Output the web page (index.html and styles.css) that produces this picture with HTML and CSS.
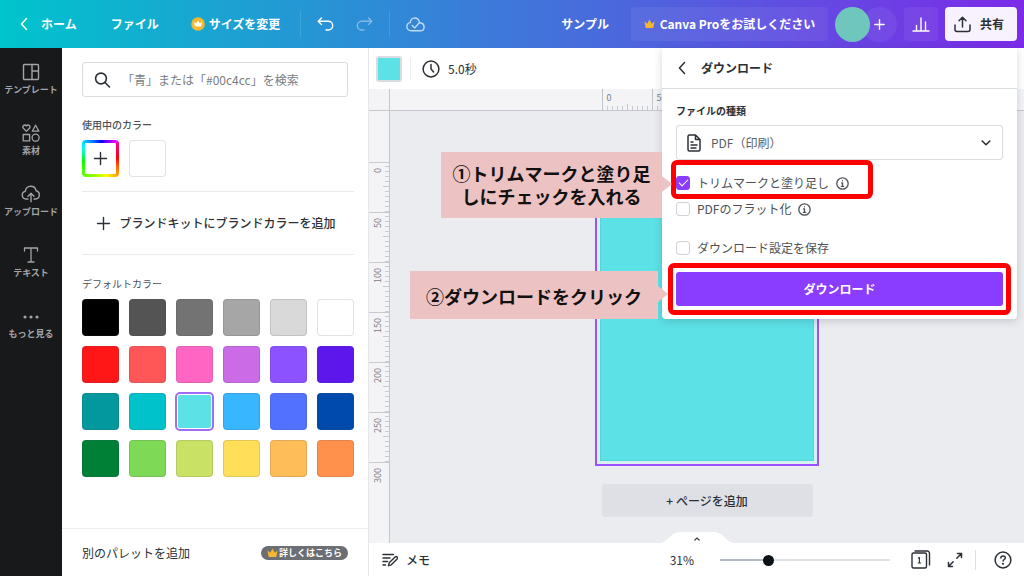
FILE: index.html
```html
<!DOCTYPE html>
<html lang="ja">
<head>
<meta charset="utf-8">
<meta name="viewport" content="width=device-width, initial-scale=1">
<title>サンプル - Canva</title>
<link rel="stylesheet" href="styles.css">
</head>
<body>
<div class="app">
  <header class="topbar">
    <button class="bar-btn home-btn">
      <svg width="8" height="14" viewBox="0 0 8 14" fill="none" stroke="currentColor" stroke-width="1.5" stroke-linecap="round" stroke-linejoin="round"><path d="M6.5 1.5 1.5 7l5 5.5"/></svg>
      ホーム
    </button>
    <button class="bar-btn file-btn">ファイル</button>
    <button class="bar-btn size-btn">
      <svg width="14" height="14" viewBox="0 0 14 14"><circle cx="7" cy="7" r="6.8" fill="#f5b82e"/><path d="M3 4.8 5 6.6 7 3.4l2 3.2 2-1.8-.9 4.8H3.9z" fill="#fff"/></svg>
      サイズを変更
    </button>
    <span class="bar-line"></span>
    <button class="bar-btn undo-btn" aria-label="元に戻す">
      <svg width="17" height="15" viewBox="0 0 17 15" fill="none" stroke="currentColor" stroke-width="1.4" stroke-linecap="round" stroke-linejoin="round"><path d="M4.5 1 1.2 4.2l3.3 3.2M1.5 4.2h9.8a4.3 4.3 0 0 1 0 8.8H9"/></svg>
    </button>
    <button class="bar-btn redo-btn" aria-label="やり直し">
      <svg width="17" height="15" viewBox="0 0 17 15" fill="none" stroke="currentColor" stroke-width="1.4" stroke-linecap="round" stroke-linejoin="round"><path d="m12.5 1 3.3 3.2-3.3 3.2M15.5 4.2H5.7a4.3 4.3 0 0 0 0 8.8H8"/></svg>
    </button>
    <span class="bar-line"></span>
    <span class="cloud">
      <svg width="19" height="15" viewBox="0 0 19 15" fill="none" stroke="currentColor" stroke-width="1.4" stroke-linecap="round" stroke-linejoin="round"><path d="M13.5 5.5C12.9 2.7 11.2 1 8.8 1 6.2 1 4.3 3 4.3 5.6 2.3 5.9.9 7.6.9 9.6c0 2.3 1.8 4.2 4.2 4.2h9c2.200 0 4-1.600 4-3.900 0-2-1.400-3.500-3.200-3.900-.7-.2-1.600 0-2.300.4M6.300 8.500 8.700 11l4-4.600"/></svg>
    </span>
    <div class="topbar-right">
      <span class="doc-title">サンプル</span>
      <button class="pro-btn">
        <svg width="11" height="10" viewBox="0 0 11 10" fill="#f5b82e"><path d="M.5 2.500 3.200 4.800 5.500.5l2.300 4.300 2.700-2.300L9.300 9H1.700z"/></svg>
        Canva Proをお試しください
      </button>
      <div class="people">
        <span class="avatar"></span>
        <button class="invite" aria-label="メンバーを追加">
          <svg width="11" height="11" viewBox="0 0 11 11" stroke="currentColor" stroke-width="1.400" stroke-linecap="round"><path d="M5.500.8v9.400M.8 5.500h9.400"/></svg>
        </button>
      </div>
      <button class="stats-btn" aria-label="インサイト">
        <svg width="18" height="15" viewBox="0 0 18 15" fill="none" stroke="currentColor" stroke-width="1.400" stroke-linecap="round"><path d="M1 14h16M4.500 13.500V8.500M9 13.500V1M13.500 13.500V5"/></svg>
      </button>
      <button class="share-btn">
        <svg width="17" height="17" viewBox="0 0 17 17" fill="none" stroke="currentColor" stroke-width="1.500" stroke-linecap="round" stroke-linejoin="round"><path d="M1 9v4.500A2 2 0 0 0 3 15.500h11a2 2 0 0 0 2-2V9M8.500 11V1.500M5 4.700l3.500-3.500L12 4.700"/></svg>
        共有
      </button>
    </div>
  </header>

  <div class="workspace">
    <nav class="rail">
      <button class="rail-item">
        <svg width="18" height="18" viewBox="0 0 18 18" fill="none" stroke="currentColor" stroke-width="1.400" stroke-linejoin="round"><rect x="1.500" y="1.500" width="15" height="15" rx="1"/><path d="M10 1.500v15M10 8h6.500"/></svg>
        テンプレート
      </button>
      <button class="rail-item">
        <svg width="18" height="18" viewBox="0 0 18 18" fill="none" stroke="currentColor" stroke-width="1.300" stroke-linejoin="round"><path d="M4.400 7.400 1.400 4.300C.2 2.900 1.200 1 2.700 1c.8 0 1.400.4 1.700 1.100C4.700 1.400 5.300 1 6.100 1c1.500 0 2.500 1.900 1.300 3.300zM13.600 1.200l3.300 6h-6.600z"/><rect x="1.200" y="10.500" width="6.400" height="6.400"/><circle cx="13.600" cy="13.700" r="3.500"/></svg>
        素材
      </button>
      <button class="rail-item">
        <svg width="20" height="18" viewBox="0 0 20 18" fill="none" stroke="currentColor" stroke-width="1.400" stroke-linecap="round" stroke-linejoin="round"><path d="M7 14H5a3.900 3.900 0 0 1-.7-7.700C4.600 3.300 7 1.200 9.800 1.200c2.900 0 4.900 2 5.300 4.600A4.200 4.200 0 0 1 14.900 14H13M10 16.800V8.500M7 11.200l3-3 3 3"/></svg>
        アップロード
      </button>
      <button class="rail-item">
        <svg width="18" height="18" viewBox="0 0 18 18" fill="none" stroke="currentColor" stroke-width="1.300" stroke-linecap="round" stroke-linejoin="round"><path d="M2.500 5V2h13v3M9 2v14M6 16h6"/></svg>
        テキスト
      </button>
      <button class="rail-item">
        <svg width="18" height="18" viewBox="0 0 18 18" fill="currentColor"><circle cx="3" cy="10" r="1.600"/><circle cx="9" cy="10" r="1.600"/><circle cx="15" cy="10" r="1.600"/></svg>
        もっと見る
      </button>
    </nav>

    <aside class="panel">
      <div class="panel-body">
        <label class="search">
          <svg width="18" height="18" viewBox="0 0 18 18" fill="none" stroke="currentColor" stroke-width="1.600" stroke-linecap="round"><circle cx="7" cy="7.500" r="5.400"/><path d="m11 11.500 4.500 4.500"/></svg>
          <input type="search" aria-label="カラーを検索" placeholder="「青」または「#00c4cc」を検索">
        </label>
        <h2 class="section-title">使用中のカラー</h2>
        <div class="swatches">
          <button class="swatch add-color" aria-label="カラーを追加">
            <svg width="15" height="15" viewBox="0 0 15 15" stroke="currentColor" stroke-width="1.400" stroke-linecap="round"><path d="M7.500 1.500v12M1.500 7.500h12"/></svg>
          </button>
          <button class="swatch white" aria-label="ホワイト"></button>
        </div>
        <button class="brand-btn">
          <svg width="15" height="15" viewBox="0 0 15 15" stroke="currentColor" stroke-width="1.400" stroke-linecap="round"><path d="M7.500 1.500v12M1.500 7.500h12"/></svg>
          ブランドキットにブランドカラーを追加
        </button>
        <h2 class="section-title default-title">デフォルトカラー</h2>
        <div class="swatches">
          <button class="swatch c-black" aria-label="黒"></button>
          <button class="swatch c-gray1" aria-label="ダークグレー"></button>
          <button class="swatch c-gray2" aria-label="グレー"></button>
          <button class="swatch c-gray3" aria-label="ミディアムグレー"></button>
          <button class="swatch c-gray4" aria-label="ライトグレー"></button>
          <button class="swatch white" aria-label="白"></button>
          <button class="swatch c-red" aria-label="赤"></button>
          <button class="swatch c-coral" aria-label="コーラル"></button>
          <button class="swatch c-pink" aria-label="ピンク"></button>
          <button class="swatch c-orchid" aria-label="オーキッド"></button>
          <button class="swatch c-purple" aria-label="パープル"></button>
          <button class="swatch c-violet" aria-label="バイオレット"></button>
          <button class="swatch c-teal" aria-label="ティール"></button>
          <button class="swatch c-turquoise" aria-label="ターコイズ"></button>
          <button class="swatch c-aqua selected" aria-label="アクア"></button>
          <button class="swatch c-sky" aria-label="スカイブルー"></button>
          <button class="swatch c-blue" aria-label="ブルー"></button>
          <button class="swatch c-navy" aria-label="コバルト"></button>
          <button class="swatch c-green" aria-label="グリーン"></button>
          <button class="swatch c-grass" aria-label="グラスグリーン"></button>
          <button class="swatch c-lime" aria-label="ライム"></button>
          <button class="swatch c-yellow" aria-label="イエロー"></button>
          <button class="swatch c-peach" aria-label="ピーチ"></button>
          <button class="swatch c-orange" aria-label="オレンジ"></button>
        </div>
      </div>
      <footer class="panel-footer">
        <span>別のパレットを追加</span>
        <a class="more-pill" href="#">
          <svg width="11" height="10" viewBox="0 0 11 10" fill="#f5b82e"><path d="M.5 2.500 3.200 4.800 5.500.5l2.300 4.300 2.700-2.300L9.300 9H1.700z"/></svg>
          詳しくはこちら
        </a>
      </footer>
    </aside>

    <main class="editor">
      <div class="toolbar">
        <button class="bg-color" aria-label="背景色"></button>
        <span class="tool-line"></span>
        <button class="time-btn">
          <svg width="18" height="18" viewBox="0 0 18 18" fill="none" stroke="currentColor" stroke-width="1.500" stroke-linecap="round" stroke-linejoin="round"><circle cx="9" cy="9" r="7.900"/><path d="M9 4.500V9l2.600 3"/></svg>
          5.0秒
        </button>
      </div>
      <div class="stage">
        <div class="ruler-corner"></div>
        <div class="ruler-top"><div class="ruler-scale"><span>0</span><span>50</span><span>100</span><span>150</span></div></div>
        <div class="ruler-left"><span>0</span><span>50</span><span>100</span><span>150</span><span>200</span><span>250</span><span class="last">300</span></div>
        <div class="canvas">
          <div class="page"><div class="artboard"></div></div>
          <button class="add-page">+ ページを追加</button>
        </div>
      </div>
      <footer class="statusbar">
        <button class="page-tab" aria-label="ページを表示">
          <svg width="74" height="12" viewBox="0 0 74 12" fill="none"><path d="M0 12C9 11 10 1 20 1h34c10 0 11 10 20 11z" fill="#fff"/><path d="m34.800 9 2.200-2 2.200 2" stroke="#3c4043" stroke-width="1.200" stroke-linecap="round"/></svg>
        </button>
        <button class="memo-btn">
          <svg width="16" height="14" viewBox="0 0 16 14" fill="none" stroke="currentColor" stroke-width="1.400" stroke-linecap="round" stroke-linejoin="round"><path d="M1 1.500h10.500M1 5h7M1 8.500h4.500M1 12h2.500"/><path d="m6.500 12.700.7-2.900 5.900-5.900c1.400-1.200 3.200.6 2 2l-5.800 5.900z"/></svg>
          メモ
        </button>
        <div class="zoom-tools">
          <label for="zoom">31%</label>
          <input id="zoom" class="zoom" type="range" min="0" max="100" value="27">
          <button class="icon-btn" aria-label="ページ一覧">
            <svg width="21" height="20" viewBox="0 0 21 20" fill="none" stroke="currentColor" stroke-width="1.400" stroke-linejoin="round"><rect x="2" y="3" width="14.500" height="15" rx="1.500"/><path d="M4.500 1h12.800A2.200 2.200 0 0 1 19.500 3.200V15.500"/><path d="M8 8.200 9.400 7.400v5.600M7.700 13h3.400" stroke-width="1.100"/></svg>
          </button>
          <button class="icon-btn" aria-label="全画面表示">
            <svg width="16" height="16" viewBox="0 0 16 16" fill="none" stroke="currentColor" stroke-width="1.500" stroke-linecap="round" stroke-linejoin="round"><path d="M10.500 1.500h4v4M14.500 1.500 9.800 6.200M5.500 14.500h-4v-4M1.500 14.500l4.700-4.700"/></svg>
          </button>
          <span class="status-line"></span>
          <button class="icon-btn" aria-label="ヘルプ">
            <svg width="18" height="18" viewBox="0 0 18 18" fill="none" stroke="currentColor" stroke-width="1.500" stroke-linecap="round"><circle cx="9" cy="9" r="7.900"/><path d="M6.900 7.100c0-1.300 1-2.100 2.200-2.100s2.200.8 2.200 1.900c0 1.500-2.200 1.700-2.200 3.200"/><circle cx="9" cy="12.800" r=".4"/></svg>
          </button>
        </div>
      </footer>
    </main>
  </div>

  <section class="download" aria-label="ダウンロード">
    <div class="download-head">
      <button class="back" aria-label="戻る">
        <svg width="8" height="14" viewBox="0 0 8 14" fill="none" stroke="currentColor" stroke-width="1.500" stroke-linecap="round" stroke-linejoin="round"><path d="M6.500 1.500 1.500 7l5 5.500"/></svg>
      </button>
      <h1>ダウンロード</h1>
    </div>
    <form class="download-form">
      <label class="type-label" for="type">ファイルの種類</label>
      <div class="select-wrap">
        <svg width="14" height="18" viewBox="0 0 14 18" fill="none" stroke="currentColor" stroke-width="1.500" stroke-linecap="round" stroke-linejoin="round"><path d="M8.500 1H2.500C1.700 1 1 1.700 1 2.500v13c0 .8.700 1.500 1.500 1.500h9c.8 0 1.500-.7 1.500-1.500v-10zM8.500 1v4.500H13M4 8h2M4 11h6M4 14h5"/></svg>
        <select id="type"><option>PDF（印刷）</option></select>
        <svg width="10" height="6" viewBox="0 0 10 6" fill="none" stroke="currentColor" stroke-width="1.600" stroke-linecap="round" stroke-linejoin="round"><path d="m1.200 1 3.800 3.700L8.800 1"/></svg>
      </div>
      <div class="option marked">
        <input type="checkbox" id="trim" checked><label for="trim">トリムマークと塗り足し</label>
        <svg class="info" width="13" height="13" viewBox="0 0 13 13" fill="none" stroke="currentColor" stroke-width="1.300" stroke-linecap="round"><circle cx="6.500" cy="6.500" r="5.700"/><path d="M6.500 6v3.300M5.700 6h.8M5.400 9.400h2.200M6.500 3.700v.1"/></svg>
        <p class="callout callout-trim">①トリムマークと塗り足<br>しにチェックを入れる</p>
      </div>
      <div class="option">
        <input type="checkbox" id="flat"><label for="flat">PDFのフラット化</label>
        <svg class="info" width="13" height="13" viewBox="0 0 13 13" fill="none" stroke="currentColor" stroke-width="1.300" stroke-linecap="round"><circle cx="6.500" cy="6.500" r="5.700"/><path d="M6.500 6v3.300M5.700 6h.8M5.400 9.400h2.200M6.500 3.700v.1"/></svg>
      </div>
      <div class="option save-option">
        <input type="checkbox" id="save"><label for="save">ダウンロード設定を保存</label>
      </div>
      <div class="submit marked">
        <button type="button" class="download-btn">ダウンロード</button>
        <p class="callout callout-download">②ダウンロードをクリック</p>
      </div>
    </form>
  </section>
</div>
</body>
</html>
```

FILE: styles.css
```css
* {
  box-sizing: border-box;
}

body {
  margin: 0;
  font-family: "Noto Sans CJK JP", "Noto Sans", sans-serif;
  font-size: 12px;
  line-height: 18px;
  color: #2b3036;
  background: #fff;
}

button,
input,
select {
  font: inherit;
  color: inherit;
}

button {
  display: flex;
  align-items: center;
  justify-content: center;
  padding: 0;
  border: 0;
  background: none;
  white-space: nowrap;
  cursor: pointer;
}

svg {
  display: block;
  flex: none;
}

h1,
h2,
p {
  margin: 0;
  font-size: inherit;
}

.app {
  position: relative;
  display: flex;
  flex-direction: column;
  min-height: 100vh;
}

/* Top bar */

.topbar {
  display: flex;
  align-items: center;
  height: 48px;
  padding: 0 7px 0 20px;
  background: linear-gradient(90deg, #00c4cc, #7d2ae8);
  color: #fff;
  font-weight: 700;
}

.home-btn {
  gap: 13px;
}

.file-btn {
  margin-left: 34px;
}

.size-btn {
  gap: 4px;
  margin: 0 20px 0 32px;
}

.bar-line {
  width: 1px;
  height: 26px;
  background: rgba(255, 255, 255, 0.12);
}

.undo-btn {
  margin-left: 16px;
}

.redo-btn {
  margin: 0 16px 0 22px;
  opacity: 0.4;
}

.cloud {
  margin-left: 16px;
  opacity: 0.7;
}

.topbar-right {
  display: flex;
  align-items: center;
  gap: 7px;
  margin-left: auto;
}

.doc-title {
  margin-right: 15px;
}

.pro-btn {
  gap: 5px;
  width: 197px;
  height: 34px;
  border-radius: 4px;
  background: rgba(255, 255, 255, 0.06);
}

.people {
  display: flex;
}

.avatar {
  z-index: 1;
  width: 35px;
  height: 35px;
  border-radius: 50%;
  background: #6fc6bd;
}

.invite {
  width: 35px;
  height: 35px;
  margin-left: -8px;
  border-radius: 50%;
  background: rgba(255, 255, 255, 0.06);
}

.stats-btn {
  width: 34px;
  height: 34px;
  border-radius: 4px;
  background: rgba(255, 255, 255, 0.06);
}

.share-btn {
  gap: 9px;
  width: 72px;
  height: 34px;
  padding-right: 4px;
  border-radius: 4px;
  background: #f7f2fd;
  color: #2b3036;
}

/* Main columns */

.workspace {
  display: flex;
  flex: 1;
}

.rail {
  flex: none;
  width: 62px;
  padding-top: 7px;
  background: #18191b;
}

.rail-item {
  flex-direction: column;
  gap: 3px;
  width: 100%;
  height: 61px;
  padding-bottom: 12px;
  color: #a2a4a7;
  font-size: 9px;
  font-weight: 700;
  line-height: 12px;
}

.panel {
  display: flex;
  flex: none;
  flex-direction: column;
  width: 306px;
}

.panel-body {
  flex: 1;
  padding: 14px 14px 0 20px;
}

.search {
  display: flex;
  align-items: center;
  gap: 10px;
  height: 35px;
  margin-right: 6px;
  padding-left: 11px;
  border: 1px solid #d8dbdf;
  border-radius: 3px;
}

.search input {
  flex: 1;
  min-width: 0;
  padding: 0;
  border: 0;
  outline: 0;
  background: none;
}

.search input::placeholder {
  color: #7a7e83;
  opacity: 1;
}

.section-title {
  margin: 20px 0 7px;
  font-size: 10px;
  font-weight: 500;
  line-height: 16px;
  color: #4d5155;
}

.default-title {
  margin-top: 21px;
  font-weight: 400;
}

.swatches {
  display: grid;
  grid-template-columns: repeat(6, 37px);
  gap: 10px;
}

.swatch {
  height: 37px;
  border: 1px solid rgba(60, 70, 90, 0.15);
  border-radius: 4px;
}

.add-color {
  border: 3px solid transparent;
  background:
    linear-gradient(#fff, #fff) padding-box,
    conic-gradient(from 45deg, #f08, #f00 12%, #ff0 32%, #0f0 60%, #0ff 72%, #00f 88%, #f0f) border-box;
}

.selected {
  border: 2px solid #fff;
  outline: 2px solid #a06cf5;
  outline-offset: -1px;
}

.white { background: #fff; }
.c-black { background: #000; }
.c-gray1 { background: #545454; }
.c-gray2 { background: #737373; }
.c-gray3 { background: #a6a6a6; }
.c-gray4 { background: #d9d9d9; }
.c-red { background: #ff1616; }
.c-coral { background: #ff5757; }
.c-pink { background: #ff66c4; }
.c-orchid { background: #cb6ce6; }
.c-purple { background: #8c52ff; }
.c-violet { background: #5e17eb; }
.c-teal { background: #03989e; }
.c-turquoise { background: #00c2cb; }
.c-aqua { background: #5ce1e6; }
.c-sky { background: #38b6ff; }
.c-blue { background: #5271ff; }
.c-navy { background: #004aad; }
.c-green { background: #008037; }
.c-grass { background: #7ed957; }
.c-lime { background: #c9e265; }
.c-yellow { background: #ffde59; }
.c-peach { background: #ffbd59; }
.c-orange { background: #ff914d; }

.brand-btn {
  gap: 8px;
  width: 100%;
  height: 64px;
  margin-top: 14px;
  padding-right: 4px;
  border-top: 1px solid #e8eaec;
  border-bottom: 1px solid #e8eaec;
  font-weight: 500;
}

.panel-footer {
  display: flex;
  align-items: center;
  justify-content: space-between;
  height: 49px;
  padding: 0 20px;
  border-top: 1px solid #ebedef;
}

.more-pill {
  display: flex;
  align-items: center;
  gap: 1px;
  padding: 0 6px;
  border-radius: 7px;
  background: #6b6e72;
  color: #fff;
  font-size: 9px;
  font-weight: 700;
  line-height: 14px;
  text-decoration: none;
}

/* Editor */

.editor {
  display: flex;
  flex: 1;
  flex-direction: column;
  min-width: 0;
  border-left: 1px solid #e4e6ea;
}

.toolbar {
  display: flex;
  align-items: center;
  height: 41px;
  padding-left: 7px;
}

.bg-color {
  width: 26px;
  height: 26px;
  border: 2px solid #d9dde1;
  border-radius: 3px;
  background: #5ce1e6;
}

.tool-line {
  width: 1px;
  height: 22px;
  margin: 0 11px 0 8px;
  background: #eceef0;
}

.time-btn {
  gap: 8px;
}

.stage {
  display: grid;
  flex: 1;
  grid-template: 22px 1fr / 21px 1fr;
}

.ruler-corner,
.ruler-top,
.ruler-left {
  background: #f4f4f7;
  color: #7c8086;
  font-size: 9px;
  line-height: 10px;
}

.ruler-corner,
.ruler-top {
  border-bottom: 1px solid #c4c7ce;
}

.ruler-corner,
.ruler-left {
  border-right: 1px solid #c4c7ce;
}

.ruler-top {
  display: flex;
  justify-content: center;
}

.ruler-scale {
  display: flex;
  width: 211px;
}

.ruler-scale span {
  flex: none;
  width: 50px;
  padding: 4px;
  border-left: 1px solid #bfc2c9;
  background:
    linear-gradient(#c8cad0, #c8cad0) 24px bottom / 1px 6px no-repeat,
    repeating-linear-gradient(90deg, transparent 0 4px, #c8cad0 4px 5px) bottom / 100% 4px no-repeat;
}

.ruler-left {
  padding-top: 51px;
}

.ruler-left span {
  display: block;
  width: 20px;
  height: 50px;
  padding: 5px 4px;
  border-bottom: 1px solid #c8cad0;
  background:
    linear-gradient(#c8cad0, #c8cad0) left 25px / 6px 1px no-repeat,
    repeating-linear-gradient(#c8cad0 0 1px, transparent 1px 5px) left / 4px 100% no-repeat;
  writing-mode: vertical-rl;
  transform: rotate(180deg);
  text-align: right;
}

.ruler-left .last {
  background: none;
}

.canvas {
  display: flex;
  flex-direction: column;
  align-items: center;
  padding: 48px 0 26px;
  background: #ebecf0;
}

.page {
  padding: 3px;
  border: 2px solid #9a52ff;
  background: #d6f0ee;
}

.artboard {
  width: 214px;
  height: 297px;
  border: 1px dotted #55c6cf;
  background: #5ce1e6;
}

.add-page {
  width: 211px;
  height: 33px;
  margin-top: 18px;
  border-radius: 3px;
  background: #dfe0e5;
  font-weight: 500;
}

.statusbar {
  position: relative;
  display: flex;
  align-items: center;
  justify-content: space-between;
  height: 34px;
  padding: 0 12px 0 13px;
}

.page-tab {
  position: absolute;
  bottom: 100%;
  left: calc(50% - 37px);
}

.memo-btn {
  gap: 8px;
  font-weight: 500;
}

.zoom-tools {
  display: flex;
  align-items: center;
}

.zoom {
  appearance: none;
  width: 170px;
  height: 12px;
  margin: 0 20px 0 26px;
  background: linear-gradient(90deg, #b4bbc2 28%, #dde1e5 28%) center / 100% 2px no-repeat;
}

.zoom::-webkit-slider-thumb {
  appearance: none;
  width: 11px;
  height: 11px;
  border-radius: 50%;
  background: #0d1216;
}

.icon-btn + .icon-btn {
  margin-left: 16px;
}

.status-line {
  width: 1px;
  height: 20px;
  margin: 0 18px 0 12px;
  background: #dcdfe3;
}

/* Download menu */

.download {
  position: absolute;
  top: 48px;
  right: 7px;
  width: 355px;
  border-radius: 0 0 4px 4px;
  background: #fff;
  box-shadow: 0 2px 8px rgba(40, 50, 70, 0.2);
}

.download-head {
  display: flex;
  align-items: center;
  gap: 15px;
  height: 41px;
  padding-left: 16px;
  border-bottom: 1px solid #d8dbdf;
}

.download-form {
  padding: 14px 14px 13px;
}

.type-label {
  display: block;
  margin-bottom: 6px;
  font-size: 10px;
  font-weight: 700;
  line-height: 16px;
}

.select-wrap {
  display: flex;
  align-items: center;
  gap: 10px;
  height: 35px;
  padding: 0 11px 0 10px;
  border: 1px solid #d8dbdf;
  border-radius: 3px;
}

.select-wrap select {
  appearance: none;
  flex: 1;
  padding: 0;
  border: 0;
  background: none;
  color: #5b5f64;
}

.option {
  position: relative;
  display: flex;
  align-items: center;
  height: 26px;
  color: #4d5155;
}

.option.marked {
  margin-top: 10px;
}

.option input {
  appearance: none;
  width: 14px;
  height: 14px;
  margin: 0 7px 0 0;
  border: 1px solid #cfd3d8;
  border-radius: 3px;
}

.option input:checked {
  border-color: #8b3dff;
  background: #8b3dff;
}

.option input:checked::before {
  display: block;
  width: 8px;
  height: 4px;
  margin: 2px;
  border: solid #fff;
  border-width: 0 0 1px 1px;
  content: "";
  transform: rotate(-45deg);
}

.info {
  margin-left: 7px;
}

.save-option {
  margin: 13px 0 11px;
}

.submit {
  position: relative;
}

.download-btn {
  width: 100%;
  height: 34px;
  border-radius: 3px;
  background: #8b3dff;
  color: #fff;
  font-weight: 700;
}

/* Tutorial marks */

.marked::after {
  position: absolute;
  border: 5px solid #f00;
  border-radius: 6px;
  content: "";
  pointer-events: none;
}

.option.marked::after {
  inset: -10px 130px -3px -5px;
}

.submit.marked::after {
  inset: -9px -8px;
}

.callout {
  position: absolute;
  z-index: 1;
  display: grid;
  align-content: center;
  background: #edc2c2;
  color: #111;
  font-size: 18px;
  font-weight: 700;
  line-height: 23px;
  text-align: center;
  white-space: nowrap;
}

.callout::after {
  position: absolute;
  top: calc(50% - 9px);
  left: 100%;
  border: 8px solid transparent;
  border-right-width: 0;
  border-left: 10px solid #edc2c2;
  content: "";
}

.callout-trim {
  top: -18px;
  right: calc(100% + 14px);
  width: 221px;
  height: 66px;
}

.callout-download {
  top: -1px;
  right: calc(100% + 18px);
  width: 248px;
  height: 48px;
  padding-top: 3px;
}
```
